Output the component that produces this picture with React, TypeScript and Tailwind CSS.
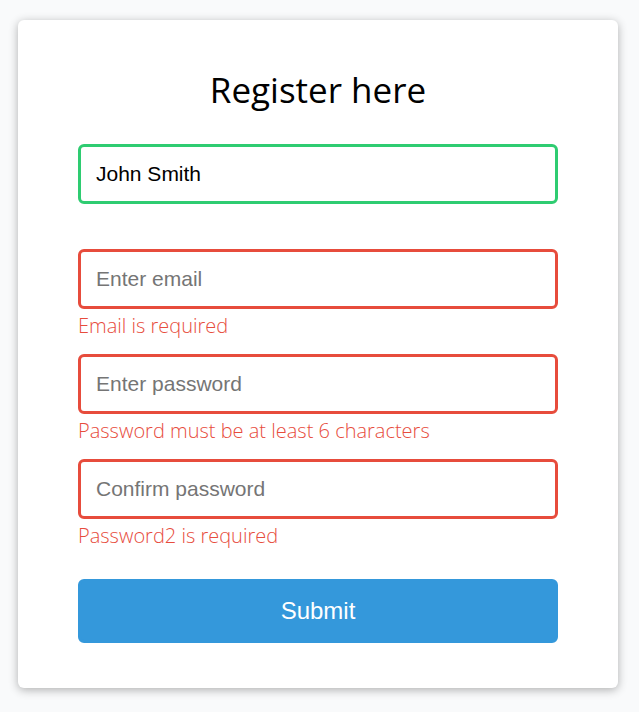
import React, { useState } from "react";

type Field = {
  name: string;
  type: string;
  placeholder: string;
  value: string;
  error?: string;
  success?: boolean;
};

export default function App() {
  const [fields] = useState<Field[]>([
    { name: "username", type: "text", placeholder: "Enter username", value: "John Smith", success: true },
    { name: "email", type: "email", placeholder: "Enter email", value: "", error: "Email is required" },
    { name: "password", type: "password", placeholder: "Enter password", value: "", error: "Password must be at least 6 characters" },
    { name: "password2", type: "password", placeholder: "Confirm password", value: "", error: "Password2 is required" },
  ]);

  return (
    <div className="min-h-[712px] w-full bg-[#f9fafb] pt-5 pl-[18px] font-['Open_Sans',sans-serif]">
      <div className="w-[600px] rounded-[6px] bg-white shadow-[0_2px_10px_rgba(0,0,0,0.3)]">
        <form className="px-[60px] py-[45px]" onSubmit={(e) => e.preventDefault()}>
          <h2 className="mb-[30px] text-center text-[35px] leading-[49px] font-normal text-black">
            Register here
          </h2>

          {fields.map((f) => (
            <div key={f.name} className="relative mb-[15px] pb-[30px]">
              <input
                type={f.type}
                placeholder={f.placeholder}
                defaultValue={f.value}
                className={`block w-full rounded-[6px] border-[3px] p-[15px] text-[21px] leading-[24px] text-black font-['Liberation_Sans',Arial,sans-serif] placeholder:text-[#757575] outline-none
                  ${f.success ? "border-[#2ecc71]" : f.error ? "border-[#e74c3c]" : "border-[#f0f0f0]"}`}
              />
              {f.error && (
                <small className="absolute bottom-0 left-0 text-[20px] leading-[27px] font-light text-[#e74c3c]">
                  {f.error}
                </small>
              )}
            </div>
          ))}

          <button
            type="submit"
            className="mt-[30px] block w-full rounded-[6px] border-[3px] border-[#3498db] bg-[#3498db] p-[15px] text-[24px] leading-[28px] text-white font-['Liberation_Sans',Arial,sans-serif]"
          >
            Submit
          </button>
        </form>
      </div>
    </div>
  );
}
